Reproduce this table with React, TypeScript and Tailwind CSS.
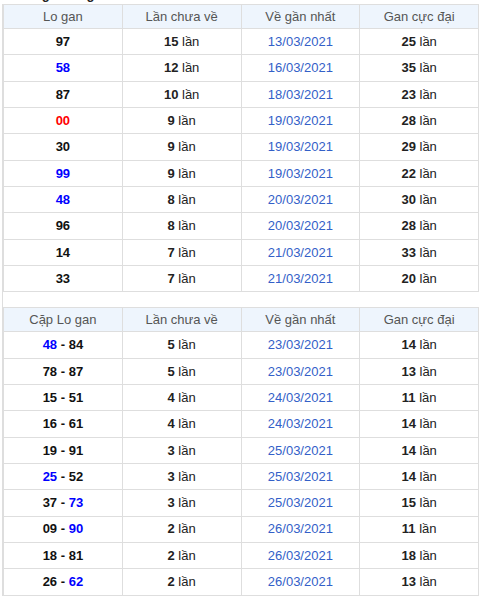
const loGan = [
  { n: [["97", "k"]], miss: 15, last: "13/03/2021", max: 25 },
  { n: [["58", "b"]], miss: 12, last: "16/03/2021", max: 35 },
  { n: [["87", "k"]], miss: 10, last: "18/03/2021", max: 23 },
  { n: [["00", "r"]], miss: 9, last: "19/03/2021", max: 28 },
  { n: [["30", "k"]], miss: 9, last: "19/03/2021", max: 29 },
  { n: [["99", "b"]], miss: 9, last: "19/03/2021", max: 22 },
  { n: [["48", "b"]], miss: 8, last: "20/03/2021", max: 30 },
  { n: [["96", "k"]], miss: 8, last: "20/03/2021", max: 28 },
  { n: [["14", "k"]], miss: 7, last: "21/03/2021", max: 33 },
  { n: [["33", "k"]], miss: 7, last: "21/03/2021", max: 20 },
];

const capGan = [
  { n: [["48", "b"], ["84", "k"]], miss: 5, last: "23/03/2021", max: 14 },
  { n: [["78", "k"], ["87", "k"]], miss: 5, last: "23/03/2021", max: 13 },
  { n: [["15", "k"], ["51", "k"]], miss: 4, last: "24/03/2021", max: 11 },
  { n: [["16", "k"], ["61", "k"]], miss: 4, last: "24/03/2021", max: 14 },
  { n: [["19", "k"], ["91", "k"]], miss: 3, last: "25/03/2021", max: 14 },
  { n: [["25", "b"], ["52", "k"]], miss: 3, last: "25/03/2021", max: 14 },
  { n: [["37", "k"], ["73", "b"]], miss: 3, last: "25/03/2021", max: 15 },
  { n: [["09", "k"], ["90", "b"]], miss: 2, last: "26/03/2021", max: 11 },
  { n: [["18", "k"], ["81", "k"]], miss: 2, last: "26/03/2021", max: 18 },
  { n: [["26", "k"], ["62", "b"]], miss: 2, last: "26/03/2021", max: 13 },
];

type Row = { n: string[][]; miss: number; last: string; max: number };

function Num({ v, c }: { v: string; c: string }) {
  const color = c === "b" ? "text-[#0000ff]" : c === "r" ? "text-[#ff0000]" : "text-[#111]";
  return <span className={color}>{v}</span>;
}

function GanTable({ first, rows }: { first: string; rows: Row[] }) {
  const td = "border border-[#dedede] text-center h-[26.33px] p-0";
  return (
    <table className="w-full table-fixed border-collapse text-[13px]">
      <thead>
        <tr className="bg-[#eef5fd] text-[#555]">
          {[first, "Lần chưa về", "Về gần nhất", "Gan cực đại"].map((h) => (
            <th key={h} className="border border-[#dedede] h-[24px] p-0 font-normal">
              {h}
            </th>
          ))}
        </tr>
      </thead>
      <tbody>
        {rows.map((r, i) => (
          <tr key={i} className="bg-white">
            <td className={td + " font-bold"}>
              {r.n.map((p, j) => (
                <span key={j}>
                  {j > 0 && <span className="text-[#111]"> - </span>}
                  <Num v={p[0]} c={p[1]} />
                </span>
              ))}
            </td>
            <td className={td + " text-[#222]"}>
              <b>{r.miss}</b> lần
            </td>
            <td className={td + " text-[#3360c8]"}>{r.last}</td>
            <td className={td + " text-[#222]"}>
              <b>{r.max}</b> lần
            </td>
          </tr>
        ))}
      </tbody>
    </table>
  );
}

export default function App() {
  return (
    <div className="h-[598px] w-[480px] overflow-hidden bg-white font-['Liberation_Sans',Arial,sans-serif]">
      {/* caption above the tables, scrolled mostly out of view */}
      <div className="h-[4px] overflow-hidden">
        <div className="-mt-[15px] pl-[10px] text-[13px] font-bold text-[#222]">
          Thống kê lô gan miền Bắc
        </div>
      </div>
      <div className="ml-[2px] mr-[1px] border-l border-[#dedede]">
        <GanTable first="Lo gan" rows={loGan} />
        <div className="h-[15px]" />
        <GanTable first="Cặp Lo gan" rows={capGan} />
      </div>
    </div>
  );
}
